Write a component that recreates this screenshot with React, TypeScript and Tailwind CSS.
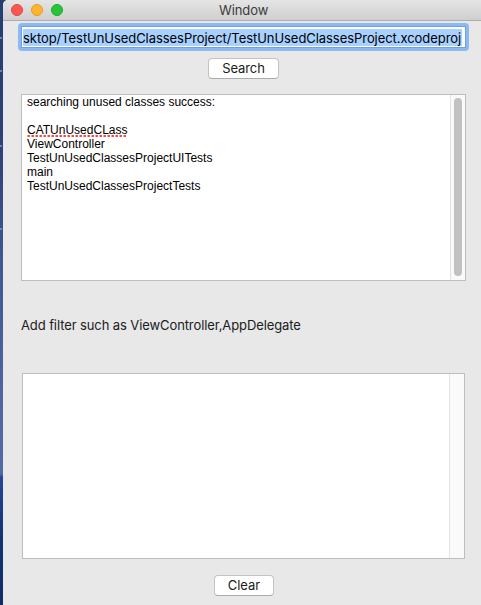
import React from "react";

const results = [
  "ViewController",
  "TestUnUsedClassesProjectUITests",
  "main",
  "TestUnUsedClassesProjectTests",
];

const stars = [
  { top: 37, left: 0 },
  { top: 70, left: 0 },
  { top: 145, left: 0 },
  { top: 228, left: 0 },
];

function PushButton({ label, className }: { label: string; className: string }) {
  return (
    <button
      className={`block h-[21px] rounded-[4px] border border-[#c3c3c3] border-b-[#ababab] bg-white text-center text-[13px] leading-[19px] text-[#202020] ${className}`}
    >
      {label}
    </button>
  );
}

export default function App() {
  return (
    <div className="relative h-[605px] w-[481px] overflow-hidden bg-[linear-gradient(to_bottom,#243f72_0px,#2a4378_150px,#3e5893_260px,#5069a3_420px,#526ba3_474px,#26469a_477px,#1d3f8c_500px,#143272_540px,#132c66_605px)] pl-[3px] font-['Inter',sans-serif]">
      {stars.map((s) => (
        <i key={s.top} className="absolute size-[2px] rounded-full bg-[#8798c4]" style={s} />
      ))}
      <main className="relative flex h-[605px] flex-col rounded-tl-[5px] bg-[#e8e8e8]">
        <header className="flex h-[21px] shrink-0 rounded-tl-[5px] border-b border-[#adadad] bg-linear-to-b from-[#e5e5e5] to-[#cfcfcf]">
          <div className="flex w-[216px] gap-2 pt-[4px] pl-[8px]">
            <span className="size-[12px] rounded-full border border-[#e24640] bg-[#fc5652]" />
            <span className="size-[12px] rounded-full border border-[#dfa023] bg-[#fdb52d]" />
            <span className="size-[12px] rounded-full border border-[#1bac2c] bg-[#27c53a]" />
          </div>
          <h1 className="text-[13px] leading-[20px] tracking-[-0.1px] text-[#3b3b3b]">Window</h1>
        </header>

        <div className="mt-[2px] ml-[15px] h-[28px] w-[451px] shrink-0 rounded-[4px] bg-[#8cb9f3] p-[3px]">
          <div className="h-[22px] w-[445px] overflow-hidden border border-[#70a0de] bg-white pt-[2px] pl-px">
            <div className="h-[17px] w-[439px] bg-[#a8d1ff] text-[13px] leading-[18px] tracking-[-0.055px] whitespace-nowrap text-black">
              sktop/TestUnUsedClassesProject/TestUnUsedClassesProject.xcodeproj
            </div>
          </div>
        </div>
        <PushButton label="Search" className="mt-[7px] ml-[205px] w-[71px] tracking-[-0.1px]" />

        <section className="mt-[15px] ml-[18px] flex h-[187px] w-[445px] shrink-0 border border-[#bdbdbd] bg-white">
          <div className="flex-1 pl-[5px] font-['Liberation_Sans',sans-serif] text-[12px] leading-[14px] text-black">
            <p>searching unused classes success:</p>
            <p className="mt-[14px]">
              <span className="relative inline-block">
                CATUnUsedCLass
                <svg className="absolute top-[11px] left-0 h-[3px] w-full">
                  <line x1="0.5" y1="2" x2="99.5" y2="2" stroke="#f5473e" strokeWidth="2" strokeDasharray="2.4 1.6" />
                </svg>
              </span>
            </p>
            {results.map((name) => (
              <p key={name}>{name}</p>
            ))}
          </div>
          <div className="w-[15px] border-l border-[#e3e3e3] bg-[#fafafa] pt-[3px] pl-[3px]">
            <div className="h-[178px] w-[8px] rounded-full bg-[#c1c1c1]" />
          </div>
        </section>

        <p className="mt-[34px] ml-[18px] h-[20px] text-[13px] leading-[20px] tracking-[-0.1px] whitespace-nowrap text-[#202020]">
          Add filter such as ViewController,AppDelegate
        </p>

        <section className="mt-[38px] ml-[19px] flex h-[186px] w-[443px] shrink-0 justify-end border border-[#bdbdbd] bg-white">
          <div className="w-[15px] border-l border-[#e3e3e3] bg-[#fafafa]" />
        </section>
        <PushButton label="Clear" className="mt-[16px] ml-[211px] w-[60px]" />
      </main>
    </div>
  );
}
